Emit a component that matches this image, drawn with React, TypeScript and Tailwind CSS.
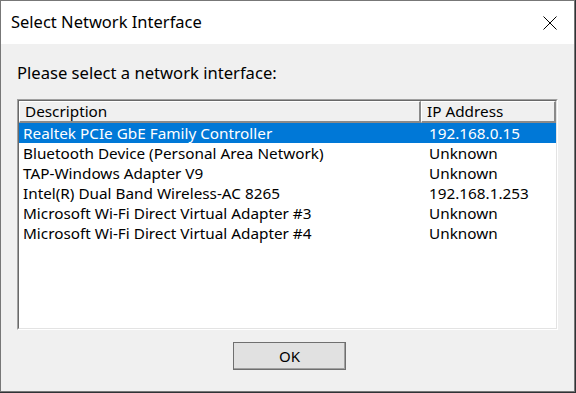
const rows = [
  { desc: 'Realtek PCIe GbE Family Controller', ip: '192.168.0.15' },
  { desc: 'Bluetooth Device (Personal Area Network)', ip: 'Unknown' },
  { desc: 'TAP-Windows Adapter V9', ip: 'Unknown' },
  { desc: 'Intel(R) Dual Band Wireless-AC 8265', ip: '192.168.1.253' },
  { desc: 'Microsoft Wi-Fi Direct Virtual Adapter #3', ip: 'Unknown' },
  { desc: 'Microsoft Wi-Fi Direct Virtual Adapter #4', ip: 'Unknown' },
];

function HeaderCell({ label, className }: { label: string; className: string }) {
  return (
    <div className={`h-[22px] border-t border-l border-t-white border-l-white border-r-2 border-b-2 border-r-[#8a8a8a] border-b-[#8a8a8a] bg-[#f0f0f0] px-[5px] flex items-center ${className}`}>
      {label}
    </div>
  );
}

export default function App() {
  return (
    <div className="w-[576px] h-[393px] bg-[#2f3336] font-['Noto_Sans',sans-serif] text-[15.3px] text-black">
      <div className="w-[575px] h-[392px] border border-[#777777] flex flex-col">
        {/* title bar */}
        <div className="h-[43px] bg-white flex items-center justify-between pl-[10px] pr-[17px]">
          <span className="text-[16.5px] leading-none">Select Network Interface</span>
          <svg width="14" height="14" viewBox="0 0 14 14" className="mt-[1px]">
            <path d="M0.5 0.5 L13.5 13.5 M13.5 0.5 L0.5 13.5" stroke="#000" strokeWidth="1" fill="none" />
          </svg>
        </div>

        {/* body */}
        <div className="flex-1 bg-[#f0f0f0] flex flex-col px-[16px] pt-[19px]">
          <div className="leading-[20px] text-[16.6px]">Please select a network interface:</div>

          <div className="mt-[16px] h-[231px] border border-t-[#a0a0a0] border-l-[#a0a0a0] border-r-white border-b-white bg-white">
            <div className="h-full border border-t-[#696969] border-l-[#696969] border-r-[#e3e3e3] border-b-[#e3e3e3] flex flex-col">
              <div className="flex">
                <HeaderCell label="Description" className="w-[402px]" />
                <HeaderCell label="IP Address" className="w-[135px]" />
              </div>
              {rows.map((r, i) => (
                <div
                  key={r.desc}
                  className={`flex h-[20px] items-center w-[537px] leading-[20px] ${i === 0 ? 'bg-[#0078d7] text-white' : ''}`}
                >
                  <div className="w-[402px] pl-[4px] whitespace-nowrap">{r.desc}</div>
                  <div className="pl-[8px] whitespace-nowrap">{r.ip}</div>
                </div>
              ))}
            </div>
          </div>

          <div className="flex justify-center mt-[12px] pl-[4px]">
            <button className="w-[113px] h-[28px] border border-[#6f6f6f] bg-[#e1e1e1] shadow-[inset_-1px_-1px_0_#a0a0a0] text-[15px]">
              OK
            </button>
          </div>
        </div>
      </div>
    </div>
  );
}
